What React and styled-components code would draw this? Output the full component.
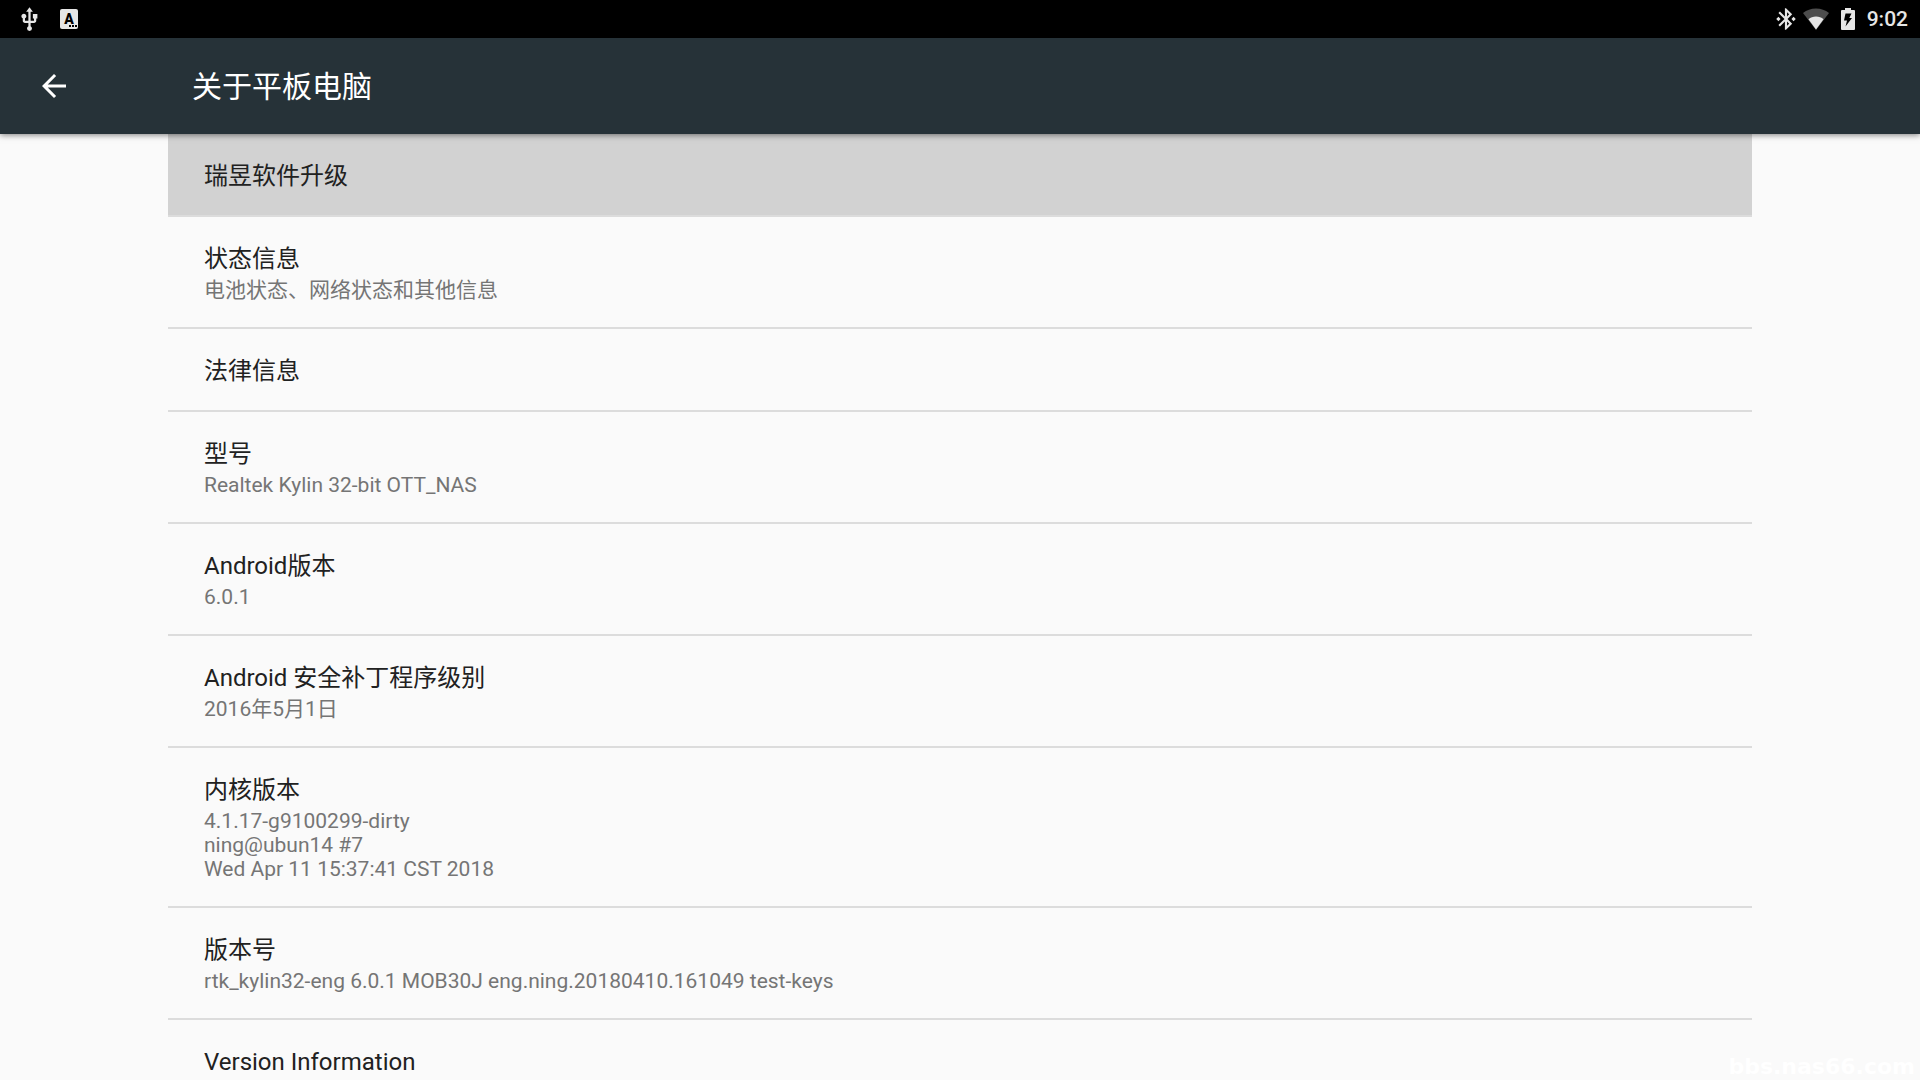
import React from 'react'
import styled, { createGlobalStyle } from 'styled-components';
import { MdArrowBack, MdBluetoothConnected, MdUsb } from 'react-icons/md';


const GlobalStyle = createGlobalStyle`
  * {
    box-sizing: border-box;
  }
  body {
    margin: 0;
    background-color: #fafafa;
    font-family: Roboto, 'Noto Sans CJK SC', sans-serif;
  }
`;

const Page = styled.div`
  display: flex;
  flex-direction: column;
  height: 100vh;
  overflow: hidden;
`;

const StatusBar = styled.header`
  display: flex;
  justify-content: space-between;
  align-items: center;
  flex-shrink: 0;
  height: 38px;
  padding: 0 12px 0 16px;
  background-color: #000;
  color: #e6e6e6;
`;

const StatusGroup = styled.div`
  display: flex;
  align-items: center;
  gap: ${({ $gap }) => $gap}px;
`;

const StatusIcon = styled.svg`
  display: block;
`;

const Clock = styled.time`
  font-size: 21px;
  line-height: 24px;
  font-weight: 500;
`;

const Toolbar = styled.nav`
  display: flex;
  align-items: center;
  flex-shrink: 0;
  height: 96px;
  padding: 0 36px;
  gap: 120px;
  background-color: #263238;
  color: #fff;
  box-shadow: 0 1px 6px rgba(0, 0, 0, 0.5);
  z-index: 1;
`;

const BackButton = styled.button`
  display: flex;
  padding: 0;
  border: 0;
  background: none;
  color: inherit;
  font-size: 36px;
  cursor: pointer;
`;

const Title = styled.h1`
  margin: 0;
  padding-top: 2px;
  font-size: 30px;
  line-height: 36px;
  font-weight: 400;
`;

const Content = styled.main`
  flex: 1;
  min-height: 0;
  padding: 0 168px;
  overflow-y: auto;
  scrollbar-width: none;
`;

const PreferenceList = styled.ul`
  margin: 0;
  padding: 0;
  list-style: none;
`;

const Preference = styled.li`
  padding: 28px 36px 25px;
  border-bottom: 2px solid #dcdcdc;
  background-color: ${({ $pressed }) => ($pressed ? '#d2d2d2' : 'transparent')};
`;

const PreferenceTitle = styled.h2`
  margin: 0;
  color: #212121;
  font-size: 24px;
  line-height: 28px;
  font-weight: 400;
`;

const Summary = styled.p`
  margin: 5px 0 0;
  color: #757575;
  font-size: 21px;
  line-height: 24px;
  white-space: pre-line;
`;

const Watermark = styled.span`
  position: absolute;
  right: 5px;
  bottom: 1px;
  color: #fff;
  font-family: 'DejaVu Sans', sans-serif;
  font-size: 22px;
  line-height: 24px;
  font-weight: 700;
  z-index: 2;
`;

const preferences = [
  { title: '瑞昱软件升级', pressed: true },
  { title: '状态信息', summary: '电池状态、网络状态和其他信息' },
  { title: '法律信息' },
  { title: '型号', summary: 'Realtek Kylin 32-bit OTT_NAS' },
  { title: 'Android版本', summary: '6.0.1' },
  { title: 'Android 安全补丁程序级别', summary: '2016年5月1日' },
  { title: '内核版本', summary: '4.1.17-g9100299-dirty\nning@ubun14 #7\nWed Apr 11 15:37:41 CST 2018' },
  { title: '版本号', summary: 'rtk_kylin32-eng 6.0.1 MOB30J eng.ning.20180410.161049 test-keys' },
  { title: 'Version Information' },
];

const KeyboardIcon = () => (
  <StatusIcon width="18" height="20" viewBox="0 0 18 20">
    <rect width="18" height="20" rx="2" fill="#e6e6e6" />
    <text x="9" y="15" textAnchor="middle" fontFamily="Roboto" fontSize="14" fontWeight="900" fill="#000">A</text>
    <path d="M9 16h2v2H9zM12 16h2v2h-2zM15 16h2v2h-2z" fill="#000" />
  </StatusIcon>
)

const WifiIcon = () => (
  <StatusIcon width="26" height="22" viewBox="0 0 26 22">
    <path d="M13 22 0 5C3.600 2 8 .5 13 .5S22.400 2 26 5z" fill="#4d4d4d" />
    <path d="M13 21.500 5.500 11.200C7.500 9.500 10 8.500 13 8.500s5.500 1 7.500 2.700z" fill="#e6e6e6" />
  </StatusIcon>
)

const BatteryIcon = () => (
  <StatusIcon width="14" height="22" viewBox="0 0 14 22">
    <path d="M4 0h6v2h3a1 1 0 0 1 1 1v18a1 1 0 0 1-1 1H1a1 1 0 0 1-1-1V3a1 1 0 0 1 1-1h3z" fill="#e6e6e6" />
    <path d="M4.500 5.500h6L8.300 10H11L4.500 18.500 6 12.500H3z" fill="#000" />
  </StatusIcon>
)

const App = () => {
  return (
    <Page>
      <GlobalStyle />
      <StatusBar>
        <StatusGroup $gap={17}>
          <MdUsb size={27} />
          <KeyboardIcon />
        </StatusGroup>
        <StatusGroup $gap={12}>
          <StatusGroup $gap={4}>
            <MdBluetoothConnected size={26} />
            <WifiIcon />
          </StatusGroup>
          <BatteryIcon />
          <Clock>9:02</Clock>
        </StatusGroup>
      </StatusBar>

      <Toolbar>
        <BackButton type="button" aria-label="返回">
          <MdArrowBack />
        </BackButton>
        <Title>关于平板电脑</Title>
      </Toolbar>

      <Content>
        <PreferenceList>
          {preferences.map(({ title, summary, pressed }) => (
            <Preference key={title} $pressed={pressed}>
              <PreferenceTitle>{title}</PreferenceTitle>
              {summary && <Summary>{summary}</Summary>}
            </Preference>
          ))}
        </PreferenceList>
      </Content>

      <Watermark>bbs.nas66.com</Watermark>
    </Page>
  )
}

export default App
